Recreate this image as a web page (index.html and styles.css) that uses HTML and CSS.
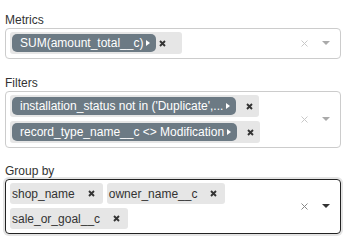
FILE: index.html
```html
<!DOCTYPE html>
<html lang="en">
<head>
    <meta charset="UTF-8">
    <meta name="viewport" content="width=device-width, initial-scale=1.0">
    <title>Query controls</title>
    <link rel="stylesheet" href="styles.css">
</head>
<body>
    <div class="panel">
        <!-- Metrics -->
        <div class="field">
            <div class="field-label">Metrics</div>
            <div class="select">
                <div class="values">
                    <span class="chip">
                        <span class="pill">SUM(amount_total__c)<i class="pill-caret"></i></span>
                        <span class="chip-x metric-x"><svg width="7" height="7" viewBox="0 0 7 7"><path d="M1 1L6 6M6 1L1 6"/></svg></span>
                    </span>
                </div>
                <span class="clear"><svg width="7" height="7" viewBox="0 0 7 7"><path d="M0.5 0.5L6.5 6.5M6.5 0.5L0.5 6.5"/></svg></span>
                <span class="arrow"><i></i></span>
            </div>
        </div>

        <!-- Filters -->
        <div class="field">
            <div class="field-label">Filters</div>
            <div class="select">
                <div class="values">
                    <span class="chip">
                        <span class="pill">installation_status not in ('Duplicate',...<i class="pill-caret"></i></span>
                        <span class="chip-x filter-x"><svg width="7" height="7" viewBox="0 0 7 7"><path d="M1 1L6 6M6 1L1 6"/></svg></span>
                    </span>
                    <span class="chip">
                        <span class="pill">record_type_name__c &lt;&gt; Modification<i class="pill-caret"></i></span>
                        <span class="chip-x filter-x"><svg width="7" height="7" viewBox="0 0 7 7"><path d="M1 1L6 6M6 1L1 6"/></svg></span>
                    </span>
                </div>
                <span class="clear"><svg width="7" height="7" viewBox="0 0 7 7"><path d="M0.5 0.5L6.5 6.5M6.5 0.5L0.5 6.5"/></svg></span>
                <span class="arrow"><i></i></span>
            </div>
        </div>

        <!-- Group by -->
        <div class="field">
            <div class="field-label">Group by</div>
            <div class="select focused">
                <div class="values">
                    <span class="chip plain">shop_name<span class="chip-x"><svg width="7" height="7" viewBox="0 0 7 7"><path d="M1 1L6 6M6 1L1 6"/></svg></span></span>
                    <span class="chip plain">owner_name__c<span class="chip-x"><svg width="7" height="7" viewBox="0 0 7 7"><path d="M1 1L6 6M6 1L1 6"/></svg></span></span>
                    <span class="chip plain">sale_or_goal__c<span class="chip-x"><svg width="7" height="7" viewBox="0 0 7 7"><path d="M1 1L6 6M6 1L1 6"/></svg></span></span>
                </div>
                <span class="clear"><svg width="7" height="7" viewBox="0 0 7 7"><path d="M0.5 0.5L6.5 6.5M6.5 0.5L0.5 6.5"/></svg></span>
                <span class="arrow"><i></i></span>
            </div>
        </div>
    </div>
</body>
</html>
```

FILE: styles.css
```css
/* Base */
body {
    margin: 0;
    padding: 13px 0 0 0;
    background: #fff;
    font-family: 'Liberation Sans', Arial, sans-serif;
    font-size: 12px;
    color: #333;
}

.panel {
    margin-left: 5px;
    width: 336px;
}

.field {
    margin-bottom: 16px;
}

.field:first-child {
    margin-bottom: 17px;
}

.field-label {
    line-height: 14px;
    margin-bottom: 1px;
}

/* Select box */
.select {
    display: flex;
    align-items: center;
    border: 1px solid #ccc;
    border-radius: 4px;
    padding: 1px 2px 2px 2px;
}

.select.focused {
    border-color: #222;
    box-shadow: 0 0 0 2px #e4e4e4;
}

.values {
    flex: 1;
    display: flex;
    flex-wrap: wrap;
}

/* Chips */
.chip {
    display: inline-flex;
    align-items: center;
    height: 22px;
    margin: 2px;
    padding-left: 2px;
    background: #e6e6e6;
    border-radius: 3px;
}

.chip.plain {
    height: 21px;
    color: #333;
}

.pill {
    display: inline-flex;
    align-items: center;
    height: 18px;
    padding: 0 6px 0 8px;
    background: #6c7a84;
    color: #fff;
    border-radius: 5px;
    white-space: nowrap;
}

.pill-caret {
    width: 0;
    height: 0;
    margin-left: 3px;
    border-left: 4px solid #fff;
    border-top: 3.5px solid transparent;
    border-bottom: 3.5px solid transparent;
}

.chip-x {
    display: inline-flex;
    align-items: center;
    padding: 0 8px 0 13px;
}

.chip-x svg path {
    stroke: #333;
    stroke-width: 1.9;
    fill: none;
}

.metric-x {
    padding: 0 16px 0 3px;
}

.filter-x {
    padding: 0 6px 0 10px;
}

/* Right controls */
.clear {
    width: 17px;
    display: flex;
    justify-content: center;
}

.clear svg path {
    stroke: #c8c8c8;
    stroke-width: 1;
    fill: none;
}

.arrow {
    width: 25px;
    display: flex;
    justify-content: center;
}

.arrow i {
    width: 0;
    height: 0;
    border-top: 4px solid #aaa;
    border-left: 4px solid transparent;
    border-right: 4px solid transparent;
}

.focused .clear svg path {
    stroke: #888;
}

.focused .arrow i {
    border-top-color: #333;
}
```
